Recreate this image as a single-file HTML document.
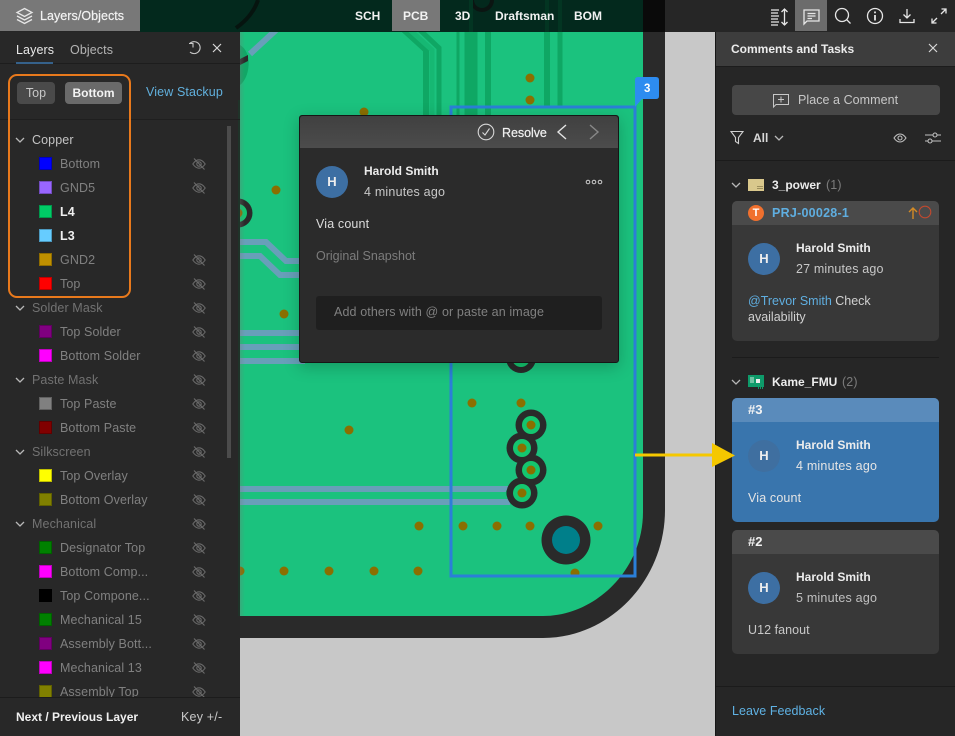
<!DOCTYPE html>
<html><head><meta charset="utf-8"><style>
*{box-sizing:border-box}
html,body{margin:0;padding:0;width:955px;height:736px;overflow:hidden;background:#c8c8c8;font-family:"Liberation Sans",sans-serif;font-size:12.5px;color:#ddd}
.a,.t{position:absolute}
.t{white-space:nowrap;line-height:16px;letter-spacing:.1px}
.bd{font-size:12px;font-weight:700;letter-spacing:0}
.r{position:absolute;left:0;width:226px;height:24px;line-height:24px;white-space:nowrap;letter-spacing:.1px}
.r i{position:absolute;left:39px;top:6px;width:13px;height:13px;border:1px solid rgba(0,0,0,.25)}
.r b{position:absolute;left:60px;top:1px;font-weight:400;color:#808080}
.r b.on{color:#f0f0f0;font-weight:700}
.r u{position:absolute;left:32px;top:1px;text-decoration:none;color:#727272}
.r svg{position:absolute}
.e{left:192px;top:6px;width:14px;height:14px}
.c{left:15px;top:8px;width:10px;height:10px}
.av{position:absolute;width:32px;height:32px;border-radius:50%;background:#3d6fa3;color:#eee;font-weight:700;text-align:center;line-height:32px;font-size:13px}
.ic{position:absolute;fill:none;stroke:#e6e6e6;stroke-width:1.3}
</style></head><body>
<svg width="0" height="0" style="position:absolute"><defs>
<g id="eye" fill="none" stroke="#6a6a6a" stroke-width="1.1"><path d="M.8 7C3 3.8 5 2.8 7 2.8S11 3.8 13.2 7C11 10.2 9 11.2 7 11.2S3 10.2.8 7Z"/><circle cx="7" cy="7" r="2.2"/><path d="M2 1.5 12.5 12.5"/></g>
<path id="chev" d="M1 3 5 7 9 3" fill="none" stroke="#b8b8b8" stroke-width="1.3"/>
<linearGradient id="lg" x1="0" x2="1" y1="0" y2="0"><stop offset="0" stop-color="#777" stop-opacity=".3"/><stop offset="1" stop-color="#777" stop-opacity="0"/></linearGradient>
</defs></svg>

<!-- board -->
<svg class="a" style="left:240px;top:0" width="475" height="736" viewBox="240 0 475 736">
<rect x="240" y="0" width="475" height="736" fill="#c8c8c8"/>
<path d="M240 0H665V510C665 580 610 638 543 638H240Z" fill="#2a2a2a"/>
<path d="M240 0H643V512C643 570 595 616 543 616H240Z" fill="#1bc27e"/>
<g fill="none" stroke="#0fa764">
<path d="M404 30 426 50V116" stroke-width="6"/><path d="M420 30 439 48V116" stroke-width="5"/>
<path d="M458 30V116" stroke-width="3"/><path d="M471 30V116" stroke-width="13"/><path d="M488 30V116" stroke-width="6"/>
<path d="M547 30V108" stroke-width="6"/><path d="M560 30V108" stroke-width="5"/>
</g>
<path d="M410 30 432 50V116" fill="none" stroke="#16b873" stroke-width="5"/>
<path d="M240 45C248 50 250 60 248 70 247 76 244 82 240 85Z" fill="#11a766"/>
<path d="M240 59 248 55 248 61 240 65Z" fill="#2a2a2a"/>
<g fill="none" stroke="#689fb9" stroke-width="6">
<path d="M250 54 276 30"/>
<path d="M240 242H266L286 261H305"/><path d="M240 256H260L280 275H305"/>
<path d="M240 333H305M240 347H305M240 361H305"/>
<path d="M240 489H510M240 502H510"/>
</g>
<path d="M506 493H516" stroke="#11a766" stroke-width="5"/>
<g fill="#8a6f00">
<circle cx="530" cy="78" r="4.5"/><circle cx="530" cy="100" r="4.5"/><circle cx="364" cy="112" r="4.5"/><circle cx="276" cy="190" r="4.5"/><circle cx="284" cy="314" r="4.5"/>
<circle cx="472" cy="403" r="4.5"/><circle cx="521" cy="403" r="4.5"/><circle cx="349" cy="430" r="4.5"/>
<circle cx="419" cy="526" r="4.5"/><circle cx="463" cy="526" r="4.5"/><circle cx="497" cy="526" r="4.5"/><circle cx="530" cy="526" r="4.5"/><circle cx="598" cy="526" r="4.5"/>
<circle cx="240" cy="571" r="4.5"/><circle cx="284" cy="571" r="4.5"/><circle cx="329" cy="571" r="4.5"/><circle cx="374" cy="571" r="4.5"/><circle cx="418" cy="571" r="4.5"/><circle cx="575" cy="573" r="4.5"/>
</g>
<g fill="#2a2a2a"><circle cx="531" cy="425" r="15.5"/><circle cx="522" cy="448" r="15.5"/><circle cx="531" cy="470" r="15.5"/><circle cx="522" cy="493" r="15.5"/><circle cx="521" cy="358" r="15"/><circle cx="238" cy="213" r="14.500"/><circle cx="566" cy="540" r="24.5"/></g>
<g fill="#14c66f"><circle cx="531" cy="425" r="9"/><circle cx="522" cy="448" r="9"/><circle cx="531" cy="470" r="9"/><circle cx="522" cy="493" r="9"/><circle cx="521" cy="358" r="9"/><circle cx="238" cy="213" r="9"/></g>
<g fill="#8a6f00"><circle cx="531" cy="425" r="4.5"/><circle cx="522" cy="448" r="4.5"/><circle cx="531" cy="470" r="4.5"/><circle cx="522" cy="493" r="4.5"/><circle cx="238" cy="213" r="4.5"/></g>
<circle cx="566" cy="540" r="14" fill="#007f8a"/>
<rect x="240" y="32" width="5" height="584" fill="url(#lg)"/>
<rect x="451" y="107" width="184" height="469" fill="none" stroke="#2b7fd8" stroke-width="3"/>
<path d="M638 77H656Q659 77 659 80V96Q659 99 656 99H642L635 107V80Q635 77 638 77Z" fill="#2d8cf0"/>
</svg>
<div class="t" style="left:644px;top:81px;font-size:11.5px;font-weight:700;color:#fff;letter-spacing:0">3</div>

<!-- top bar -->
<div class="a" style="left:0;top:0;width:955px;height:32px;background:#262626"></div>
<div class="a" style="left:140px;top:0;width:503px;height:32px;background:#03291d"></div>
<svg class="a" style="left:140px;top:0" width="503" height="32" viewBox="140 0 503 32"><path d="M258 0C254 12 246 21 236 28" fill="none" stroke="#06140f" stroke-width="4"/><circle cx="482" cy="0" r="10" fill="none" stroke="#0b1512" stroke-width="4"/><path d="M471 0V32M547 0V32M560 0V32" stroke="#033522" stroke-width="4"/></svg>
<div class="a" style="left:643px;top:0;width:22px;height:32px;background:#0a0a0a"></div>
<div class="a" style="left:0;top:0;width:140px;height:31px;background:#787878"></div>
<div class="a" style="left:392px;top:0;width:48px;height:31px;background:#787878"></div>
<div class="a" style="left:795px;top:0;width:32px;height:31px;background:#6c6c6c"></div>
<svg class="ic" style="left:15px;top:7px" width="19" height="19" viewBox="0 0 19 19"><path d="M9.5 1.5 17 5.5 9.5 9.5 2 5.5Z"/><path d="M2 9 9.5 13 17 9"/><path d="M2 12.5 9.5 16.5 17 12.5"/></svg>
<div class="t" style="left:40px;top:8px;color:#f2f2f2;-webkit-text-stroke:.2px #f2f2f2;letter-spacing:.05px">Layers/Objects</div>
<div class="t bd" style="left:355px;top:8px;color:#f2f2f2">SCH</div>
<div class="t bd" style="left:403px;top:8px;color:#f2f2f2">PCB</div>
<div class="t bd" style="left:455px;top:8px;color:#f2f2f2">3D</div>
<div class="t bd" style="left:495px;top:8px;color:#f2f2f2">Draftsman</div>
<div class="t bd" style="left:574px;top:8px;color:#f2f2f2">BOM</div>
<svg class="ic" style="left:770px;top:7px" width="22" height="20" viewBox="0 0 22 20"><path d="M1 3H9M1 6H8M1 9H9M1 12H8M1 15H9M1 18H8M14.500 2V18M11.500 5 14.500 2 17.500 5M11.500 15 14.500 18 17.500 15"/></svg>
<svg class="ic" style="left:802px;top:8px" width="19" height="18" viewBox="0 0 19 18"><path d="M2 2H17V13H5L2 16Z"/><path d="M5.500 5.500H13.500M5.500 8H13.500M5.500 10.500H10"/></svg>
<svg class="ic" style="left:834px;top:7px" width="18" height="18" viewBox="0 0 18 18"><circle cx="8" cy="8" r="6.500"/><path d="M12.700 12.700 16.500 16.500"/></svg>
<svg class="ic" style="left:866px;top:7px" width="18" height="18" viewBox="0 0 18 18"><circle cx="9" cy="9" r="7.500"/><path d="M9 8V13.500M9 4.500V6.200" stroke-width="1.8"/></svg>
<svg class="ic" style="left:899px;top:8px" width="16" height="16" viewBox="0 0 16 16"><path d="M8 1V10M4.500 6.500 8 10 11.500 6.500M1 11V14.500H15V11"/></svg>
<svg class="ic" style="left:931px;top:8px" width="16" height="16" viewBox="0 0 16 16"><path d="M1 15 6 10M1 10.500V15H5.500M15 1 10 6M10.500 1H15V5.500"/></svg>

<!-- left panel -->
<div class="a" style="left:0;top:32px;width:240px;height:704px;background:#282828"></div>
<div class="a" style="left:238px;top:100px;width:2px;height:516px;background:#1f3329"></div>
<div class="a" style="left:0;top:63px;width:240px;height:1px;background:#1d1d1d"></div>
<div class="a" style="left:16px;top:62px;width:37px;height:2px;background:#35618a"></div>
<div class="t" style="left:16px;top:42px;color:#e8e8e8">Layers</div>
<div class="t" style="left:70px;top:42px;color:#b4b4b4">Objects</div>
<svg class="ic" style="left:188px;top:41px;stroke:#c8c8c8;stroke-width:1.1" width="15" height="15" viewBox="0 0 15 15"><path d="M1 2.500H5V6.500"/><path d="M1.500 2.800A6 6 0 1 1 2 11"/></svg>
<svg class="ic" style="left:212px;top:43px;stroke:#d8d8d8;stroke-width:1.2" width="10" height="10" viewBox="0 0 10 10"><path d="M1 1 9 9M9 1 1 9"/></svg>
<div class="a" style="left:17px;top:82px;width:38px;height:22px;background:#4a4a4a;border-radius:4px;text-align:center;line-height:22px;color:#c8c8c8">Top</div>
<div class="a bd" style="left:65px;top:82px;width:57px;height:22px;background:#6a6a6a;border-radius:4px;text-align:center;line-height:22px;color:#f4f4f4">Bottom</div>
<div class="t" style="left:146px;top:84px;color:#61b0dd;letter-spacing:.12px">View Stackup</div>
<div class="a" style="left:0;top:119px;width:240px;height:1px;background:#1f1f1f"></div>
<div class="a" style="left:227px;top:126px;width:4px;height:332px;background:#4c4c4c"></div>

<div class="r" style="top:127px"><svg class="c"><use href="#chev"/></svg><u style="color:#c4c4c4">Copper</u></div>
<div class="r" style="top:151px"><i style="background:#0000ff"></i><b>Bottom</b><svg class="e"><use href="#eye"/></svg></div>
<div class="r" style="top:175px"><i style="background:#9966ff"></i><b>GND5</b><svg class="e"><use href="#eye"/></svg></div>
<div class="r" style="top:199px"><i style="background:#00cc66"></i><b class="on">L4</b></div>
<div class="r" style="top:223px"><i style="background:#66ccff"></i><b class="on">L3</b></div>
<div class="r" style="top:247px"><i style="background:#bf9000"></i><b>GND2</b><svg class="e"><use href="#eye"/></svg></div>
<div class="r" style="top:271px"><i style="background:#ff0000"></i><b>Top</b><svg class="e"><use href="#eye"/></svg></div>
<div class="r" style="top:295px"><svg class="c"><use href="#chev"/></svg><u>Solder Mask</u><svg class="e"><use href="#eye"/></svg></div>
<div class="r" style="top:319px"><i style="background:#800080"></i><b>Top Solder</b><svg class="e"><use href="#eye"/></svg></div>
<div class="r" style="top:343px"><i style="background:#ff00ff"></i><b>Bottom Solder</b><svg class="e"><use href="#eye"/></svg></div>
<div class="r" style="top:367px"><svg class="c"><use href="#chev"/></svg><u>Paste Mask</u><svg class="e"><use href="#eye"/></svg></div>
<div class="r" style="top:391px"><i style="background:#808080"></i><b>Top Paste</b><svg class="e"><use href="#eye"/></svg></div>
<div class="r" style="top:415px"><i style="background:#800000"></i><b>Bottom Paste</b><svg class="e"><use href="#eye"/></svg></div>
<div class="r" style="top:439px"><svg class="c"><use href="#chev"/></svg><u>Silkscreen</u><svg class="e"><use href="#eye"/></svg></div>
<div class="r" style="top:463px"><i style="background:#ffff00"></i><b>Top Overlay</b><svg class="e"><use href="#eye"/></svg></div>
<div class="r" style="top:487px"><i style="background:#808000"></i><b>Bottom Overlay</b><svg class="e"><use href="#eye"/></svg></div>
<div class="r" style="top:511px"><svg class="c"><use href="#chev"/></svg><u>Mechanical</u><svg class="e"><use href="#eye"/></svg></div>
<div class="r" style="top:535px"><i style="background:#008000"></i><b>Designator Top</b><svg class="e"><use href="#eye"/></svg></div>
<div class="r" style="top:559px"><i style="background:#ff00ff"></i><b>Bottom Comp...</b><svg class="e"><use href="#eye"/></svg></div>
<div class="r" style="top:583px"><i style="background:#000"></i><b>Top Compone...</b><svg class="e"><use href="#eye"/></svg></div>
<div class="r" style="top:607px"><i style="background:#008000"></i><b>Mechanical 15</b><svg class="e"><use href="#eye"/></svg></div>
<div class="r" style="top:631px"><i style="background:#800080"></i><b>Assembly Bott...</b><svg class="e"><use href="#eye"/></svg></div>
<div class="r" style="top:655px"><i style="background:#ff00ff"></i><b>Mechanical 13</b><svg class="e"><use href="#eye"/></svg></div>
<div class="r" style="top:679px"><i style="background:#808000"></i><b>Assembly Top</b><svg class="e"><use href="#eye"/></svg></div>
<div class="a" style="left:0;top:697px;width:240px;height:39px;background:#282828;border-top:1px solid #1c1c1c"></div>
<div class="t bd" style="left:16px;top:709px;color:#f0f0f0">Next / Previous Layer</div>
<div class="t" style="left:181px;top:709px;color:#c8c8c8;letter-spacing:.2px">Key +/-</div>
<div class="a" style="left:8px;top:74px;width:123px;height:224px;border:2.5px solid #e8791c;border-radius:9px"></div>

<!-- dialog -->
<div class="a" style="left:299px;top:115px;width:320px;height:248px;background:#2b2b2b;border:1px solid #161616;border-radius:3px;box-shadow:0 4px 16px rgba(0,0,0,.22)"></div>
<div class="a" style="left:300px;top:116px;width:318px;height:32px;background:linear-gradient(#404040,#4c4c4c);border-radius:3px 3px 0 0"></div>
<svg class="ic" style="left:477px;top:123px;stroke:#d8d8d8;stroke-width:1.1" width="18" height="18" viewBox="0 0 18 18"><circle cx="9" cy="9" r="7.800"/><path d="M5.500 9.500 8 12 12.500 5.500"/></svg>
<div class="t" style="left:502px;top:125px;color:#f0f0f0;-webkit-text-stroke:.2px #f0f0f0;letter-spacing:-.05px">Resolve</div>
<svg class="ic" style="left:556px;top:124px;stroke:#e4e4e4;stroke-width:1.4" width="12" height="16" viewBox="0 0 12 16"><path d="M10 1 2 8 10 15"/></svg>
<svg class="ic" style="left:588px;top:124px;stroke:#888;stroke-width:1.4" width="12" height="16" viewBox="0 0 12 16"><path d="M2 1 10 8 2 15"/></svg>
<div class="av" style="left:316px;top:166px">H</div>
<div class="t bd" style="left:364px;top:163px;color:#ececec">Harold Smith</div>
<div class="t" style="left:364px;top:184px;color:#c8c8c8;letter-spacing:.2px">4 minutes ago</div>
<svg class="ic" style="left:585px;top:178px;stroke:#d0d0d0;stroke-width:1" width="18" height="8" viewBox="0 0 18 8"><circle cx="3" cy="4" r="1.800"/><circle cx="9" cy="4" r="1.800"/><circle cx="15" cy="4" r="1.800"/></svg>
<div class="t" style="left:316px;top:216px;color:#dcdcdc;letter-spacing:.15px">Via count</div>
<div class="t" style="left:316px;top:248px;color:#7c7c7c;letter-spacing:0">Original Snapshot</div>
<div class="a" style="left:316px;top:296px;width:286px;height:34px;background:#1f1f1f;border-radius:3px"></div>
<div class="t" style="left:334px;top:304px;color:#808080;letter-spacing:.12px">Add others with @ or paste an image</div>

<!-- right panel -->
<div class="a" style="left:715px;top:32px;width:240px;height:704px;background:#262626;border-left:1px solid #161616"></div>
<div class="a" style="left:716px;top:32px;width:239px;height:35px;background:#3d3d3d;border-bottom:1px solid #1c1c1c"></div>
<div class="t bd" style="left:731px;top:41px;color:#ececec">Comments and Tasks</div>
<svg class="ic" style="left:928px;top:43px;stroke:#d8d8d8;stroke-width:1.2" width="10" height="10" viewBox="0 0 10 10"><path d="M1 1 9 9M9 1 1 9"/></svg>
<div class="a" style="left:732px;top:85px;width:208px;height:30px;background:#474747;border-radius:4px"></div>
<svg class="ic" style="left:772px;top:93px;stroke:#c8c8c8;stroke-width:1" width="18" height="16" viewBox="0 0 18 16"><path d="M1.500 1.500H16.500V11.500H4L1.500 14Z"/><path d="M9 3.500V9.500M6 6.500H12"/></svg>
<div class="t" style="left:798px;top:92px;color:#c8c8c8;letter-spacing:.05px">Place a Comment</div>
<svg class="ic" style="left:730px;top:130px;stroke:#d0d0d0;stroke-width:1.1" width="14" height="15" viewBox="0 0 14 15"><path d="M1 1.500H13L8.500 7.500V13.500L5.500 11.500V7.500Z"/></svg>
<div class="t bd" style="left:753px;top:130px;color:#d8d8d8">All</div>
<svg class="a" style="left:774px;top:133px" width="10" height="10"><use href="#chev"/></svg>
<svg class="ic" style="left:893px;top:132px;stroke:#c0c0c0;stroke-width:1.1" width="14" height="12" viewBox="0 0 14 12"><path d="M1 6C3 3 5 2 7 2S11 3 13 6C11 9 9 10 7 10S3 9 1 6Z"/><circle cx="7" cy="6" r="2"/></svg>
<svg class="ic" style="left:924px;top:131px;stroke:#c0c0c0;stroke-width:1.1" width="18" height="14" viewBox="0 0 18 14"><path d="M1 4H9M13 4H17M1 10H4M8 10H17"/><circle cx="11" cy="4" r="2"/><circle cx="6" cy="10" r="2"/></svg>
<div class="a" style="left:716px;top:160px;width:239px;height:1px;background:#1b1b1b"></div>

<svg class="a" style="left:731px;top:180px" width="10" height="10"><use href="#chev"/></svg>
<div class="a" style="left:748px;top:179px;width:16px;height:12px;background:#d9c88c"></div>
<div class="a" style="left:757px;top:186px;width:6px;height:1px;background:#9c8e5c;box-shadow:0 2px 0 #9c8e5c"></div>
<div class="t bd" style="left:772px;top:177px;color:#ececec">3_power</div>
<div class="t" style="left:826px;top:177px;color:#7c7c7c">(1)</div>

<div class="a" style="left:732px;top:201px;width:207px;height:140px;background:#383838;border-radius:5px"></div>
<div class="a" style="left:732px;top:201px;width:207px;height:24px;background:#4a4a4a;border-radius:5px 5px 0 0"></div>
<div class="a" style="left:748px;top:205px;width:16px;height:16px;border-radius:50%;background:#f0702e;color:#fff;font-weight:700;font-size:11px;line-height:16px;text-align:center">T</div>
<div class="t" style="left:772px;top:205px;color:#5faee0;font-weight:700;letter-spacing:.25px">PRJ-00028-1</div>
<svg class="ic" style="left:907px;top:206px;stroke:#d28a26;stroke-width:1.4" width="12" height="14" viewBox="0 0 12 14"><path d="M6 13V2M2 6 6 2 10 6"/></svg>
<svg class="ic" style="left:918px;top:205px;stroke:#c0492f;stroke-width:1.1" width="14" height="14" viewBox="0 0 14 14"><circle cx="7" cy="7" r="5.800"/></svg>
<div class="av" style="left:748px;top:243px">H</div>
<div class="t bd" style="left:796px;top:240px;color:#ececec">Harold Smith</div>
<div class="t" style="left:796px;top:261px;color:#c8c8c8;letter-spacing:.15px">27 minutes ago</div>
<div class="t" style="left:748px;top:293px;color:#d0d0d0;letter-spacing:0"><span style="color:#5faee0">@Trevor Smith</span> Check</div>
<div class="t" style="left:748px;top:309px;color:#d0d0d0;letter-spacing:0">availability</div>
<div class="a" style="left:732px;top:357px;width:207px;height:1px;background:#1b1b1b"></div>

<svg class="a" style="left:731px;top:377px" width="10" height="10"><use href="#chev"/></svg>
<svg class="a" style="left:748px;top:375px" width="16" height="14" viewBox="0 0 16 14"><rect width="16" height="12" fill="#0e9b6a"/><rect x="8" y="4" width="4" height="4" fill="#eee"/><path d="M2 3H6M2 5H6M2 7H6" stroke="#d0e8dc"/><path d="M10 13H15" stroke="#0e9b6a" stroke-width="2" stroke-dasharray="1 1"/></svg>
<div class="t bd" style="left:772px;top:374px;color:#ececec">Kame_FMU</div>
<div class="t" style="left:842px;top:374px;color:#7c7c7c">(2)</div>

<div class="a" style="left:732px;top:398px;width:207px;height:124px;background:#3975ad;border-radius:5px"></div>
<div class="a" style="left:732px;top:398px;width:207px;height:24px;background:#5a8bbb;border-radius:5px 5px 0 0"></div>
<div class="t bd" style="left:748px;top:402px;color:#f4f4f4;font-size:13px">#3</div>
<div class="av" style="left:748px;top:440px;background:#3f6fa0">H</div>
<div class="t bd" style="left:796px;top:437px;color:#ececec">Harold Smith</div>
<div class="t" style="left:796px;top:458px;color:#e4e4e4;letter-spacing:.2px">4 minutes ago</div>
<div class="t" style="left:748px;top:490px;color:#e4e4e4;letter-spacing:.15px">Via count</div>

<div class="a" style="left:732px;top:530px;width:207px;height:124px;background:#383838;border-radius:5px"></div>
<div class="a" style="left:732px;top:530px;width:207px;height:24px;background:#4a4a4a;border-radius:5px 5px 0 0"></div>
<div class="t bd" style="left:748px;top:534px;color:#f0f0f0;font-size:13px">#2</div>
<div class="av" style="left:748px;top:572px">H</div>
<div class="t bd" style="left:796px;top:569px;color:#ececec">Harold Smith</div>
<div class="t" style="left:796px;top:590px;color:#c0c0c0;letter-spacing:.2px">5 minutes ago</div>
<div class="t" style="left:748px;top:622px;color:#c8c8c8;letter-spacing:.05px">U12 fanout</div>

<div class="a" style="left:716px;top:686px;width:239px;height:1px;background:#1b1b1b"></div>
<div class="t" style="left:732px;top:703px;color:#5fb2e4;letter-spacing:.05px">Leave Feedback</div>

<!-- arrow -->
<svg class="a" style="left:630px;top:440px" width="110" height="32" viewBox="630 440 110 32"><path d="M635 453.500H712V443L735 455.500 712 467V456.500H635Z" fill="#f5c800"/></svg>
</body></html>
